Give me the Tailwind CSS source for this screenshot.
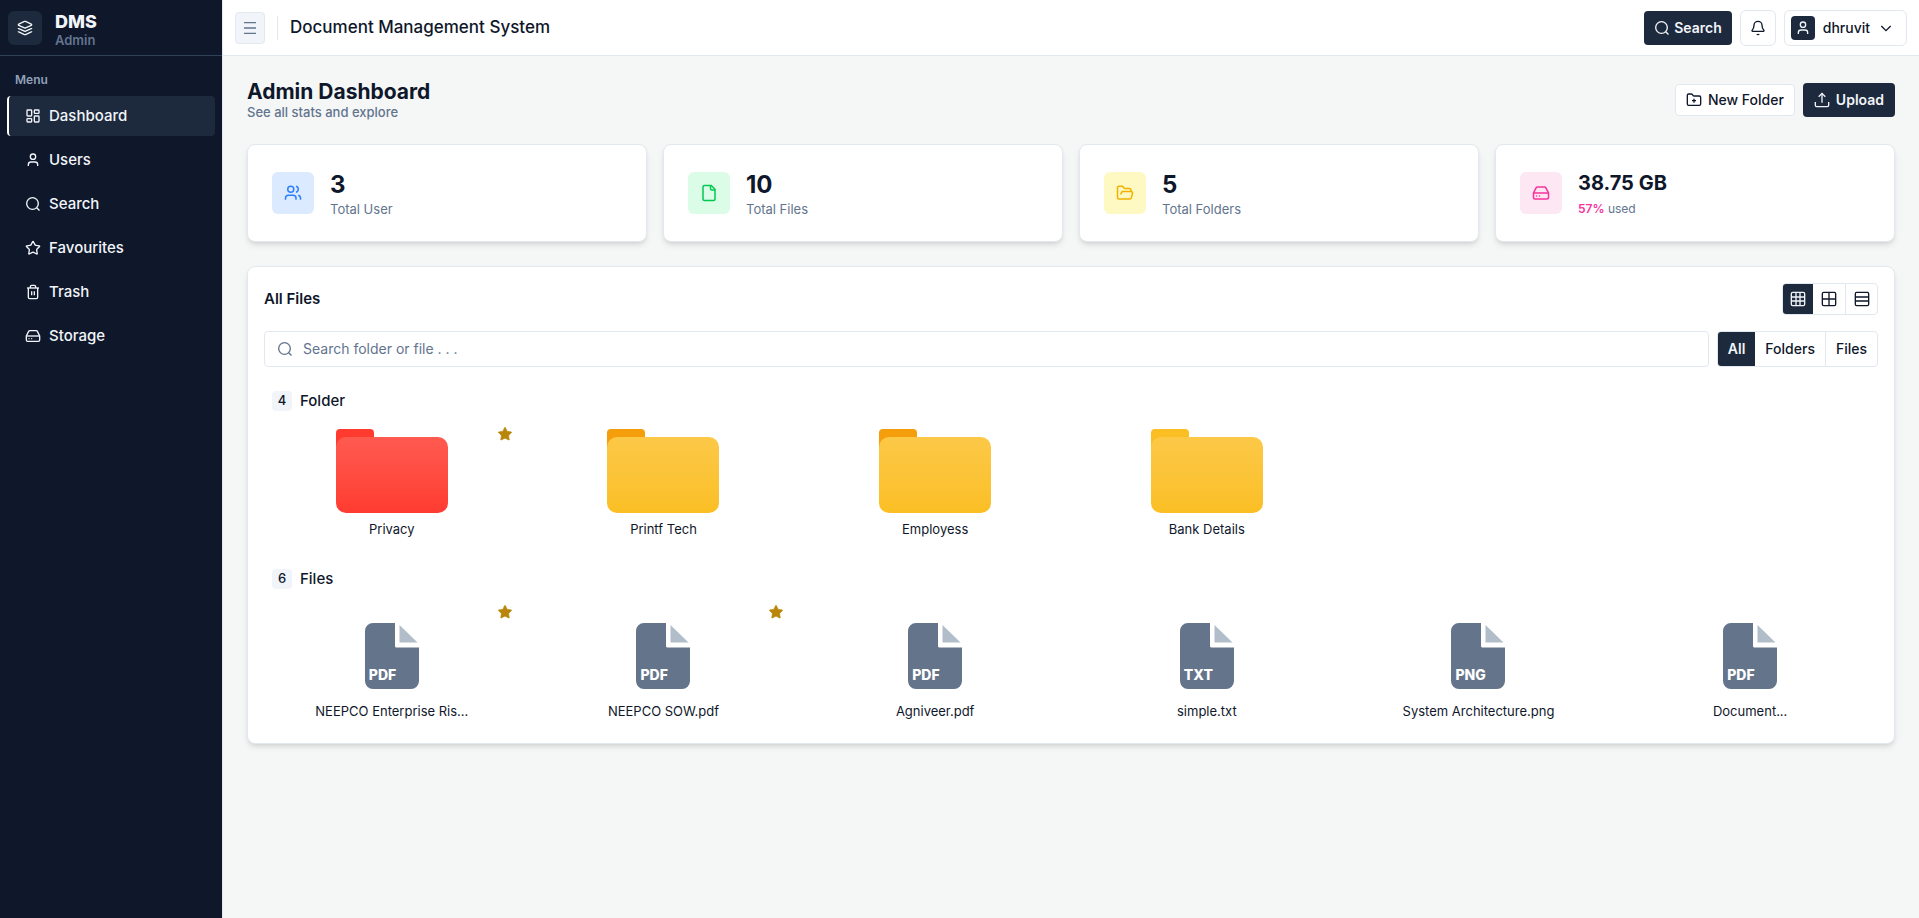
<!DOCTYPE html>
<html lang="en">
<head>
    <meta charset="UTF-8">
    <meta name="viewport" content="width=device-width, initial-scale=1.0">
    <title>DMS - Admin Dashboard</title>
    <script src="https://cdn.jsdelivr.net/npm/@tailwindcss/browser@4"></script>
</head>
<body class="bg-[#f5f7f7] font-['Inter',sans-serif] text-slate-900">
    <!-- Icon sprite -->
    <svg class="hidden" xmlns="http://www.w3.org/2000/svg">
        <symbol id="i-layers" viewBox="0 0 24 24"><path d="M12.83 2.18a2 2 0 0 0-1.66 0L2.6 6.08a1 1 0 0 0 0 1.83l8.58 3.91a2 2 0 0 0 1.66 0l8.58-3.9a1 1 0 0 0 0-1.83Z"/><path d="M2 12a1 1 0 0 0 .58.91l8.6 3.91a2 2 0 0 0 1.65 0l8.58-3.9A1 1 0 0 0 22 12"/><path d="M2 17a1 1 0 0 0 .58.91l8.6 3.91a2 2 0 0 0 1.65 0l8.58-3.9A1 1 0 0 0 22 17"/></symbol>
        <symbol id="i-dashboard" viewBox="0 0 24 24"><rect width="7" height="9" x="3" y="3" rx="1"/><rect width="7" height="5" x="14" y="3" rx="1"/><rect width="7" height="9" x="14" y="12" rx="1"/><rect width="7" height="5" x="3" y="16" rx="1"/></symbol>
        <symbol id="i-user" viewBox="0 0 24 24"><path d="M19 21v-2a4 4 0 0 0-4-4H9a4 4 0 0 0-4 4v2"/><circle cx="12" cy="7" r="4"/></symbol>
        <symbol id="i-users" viewBox="0 0 24 24"><path d="M16 21v-2a4 4 0 0 0-4-4H6a4 4 0 0 0-4 4v2"/><circle cx="9" cy="7" r="4"/><path d="M22 21v-2a4 4 0 0 0-3-3.87"/><path d="M16 3.13a4 4 0 0 1 0 7.75"/></symbol>
        <symbol id="i-search" viewBox="0 0 24 24"><circle cx="11.25" cy="11.25" r="8.75"/><path d="m17.500 17.500 4.250 4.250"/></symbol>
        <symbol id="i-star" viewBox="0 0 24 24"><path d="M11.525 2.295a.53.53 0 0 1 .95 0l2.31 4.679a2.12 2.12 0 0 0 1.595 1.16l5.166.756a.53.53 0 0 1 .294.904l-3.736 3.638a2.12 2.12 0 0 0-.611 1.878l.882 5.14a.53.53 0 0 1-.771.56l-4.618-2.428a2.12 2.12 0 0 0-1.973 0L6.396 21.01a.53.53 0 0 1-.77-.56l.881-5.139a2.12 2.12 0 0 0-.611-1.879L2.16 9.795a.53.53 0 0 1 .294-.906l5.165-.755a2.12 2.12 0 0 0 1.597-1.16z"/></symbol>
        <symbol id="i-trash" viewBox="0 0 24 24"><path d="M3 6h18"/><path d="M19 6v14a2 2 0 0 1-2 2H7a2 2 0 0 1-2-2V6"/><path d="M8 6V4a2 2 0 0 1 2-2h4a2 2 0 0 1 2 2v2"/><path d="M10 11v6M14 11v6"/></symbol>
        <symbol id="i-drive" viewBox="0 0 24 24"><path d="M22 12H2"/><path d="M5.45 5.11 2 12v6a2 2 0 0 0 2 2h16a2 2 0 0 0 2-2v-6l-3.45-6.89A2 2 0 0 0 16.76 4H7.24a2 2 0 0 0-1.79 1.11z"/><path stroke-linecap="round" d="M6 16h.01M10 16h.01"/></symbol>
        <symbol id="i-menu" viewBox="0 0 24 24"><path d="M3 4h18M3 12h18M3 20h18"/></symbol>
        <symbol id="i-bell" viewBox="0 0 24 24"><path d="M10.268 21a2 2 0 0 0 3.464 0"/><path d="M3.262 15.326A1 1 0 0 0 4 17h16a1 1 0 0 0 .74-1.673C19.41 13.956 18 12.499 18 8A6 6 0 0 0 6 8c0 4.499-1.411 5.956-2.738 7.326"/></symbol>
        <symbol id="i-chevron" viewBox="0 0 24 24"><path d="m5 9 7 7 7-7"/></symbol>
        <symbol id="i-folder-plus" viewBox="0 0 24 24"><path d="M12 10v6M9 13h6"/><path d="M20 20a2 2 0 0 0 2-2V8a2 2 0 0 0-2-2h-7.900a2 2 0 0 1-1.690-.9L9.600 3.900A2 2 0 0 0 7.930 3H4a2 2 0 0 0-2 2v13a2 2 0 0 0 2 2Z"/></symbol>
        <symbol id="i-upload" viewBox="0 0 24 24"><path d="M12 16V2"/><path d="m7 7 5-5 5 5"/><path d="M2 15v5a2 2 0 0 0 2 2h16a2 2 0 0 0 2-2v-5"/></symbol>
        <symbol id="i-file" viewBox="0 0 24 24"><path d="M15 2H6a2 2 0 0 0-2 2v16a2 2 0 0 0 2 2h12a2 2 0 0 0 2-2V7Z"/><path d="M14 2v4a2 2 0 0 0 2 2h4"/></symbol>
        <symbol id="i-folder-open" viewBox="0 0 24 24"><path d="m6 14 1.5-2.9A2 2 0 0 1 9.24 10H20a2 2 0 0 1 1.94 2.5l-1.54 6a2 2 0 0 1-1.95 1.5H4a2 2 0 0 1-2-2V5a2 2 0 0 1 2-2h3.9a2 2 0 0 1 1.69.9l.81 1.2a2 2 0 0 0 1.67.9H18a2 2 0 0 1 2 2v2"/></symbol>
        <symbol id="i-grid3" viewBox="0 0 24 24"><rect width="20" height="20" x="2" y="2" rx="2"/><path d="M2 9h20M2 15h20M9 2v20M15 2v20"/></symbol>
        <symbol id="i-grid2" viewBox="0 0 24 24"><rect width="20" height="20" x="2" y="2" rx="2"/><path d="M2 12h20M12 2v20"/></symbol>
        <symbol id="i-rows" viewBox="0 0 24 24"><rect width="20" height="20" x="2" y="2" rx="2"/><path d="M2 9h20M2 15h20"/></symbol>
        <symbol id="i-doc" viewBox="0 0 54 66"><path fill="#64748b" d="M8 0H30V23a1.500 1.500 0 0 0 1.500 1.500H54V58a8 8 0 0 1-8 8H8a8 8 0 0 1-8-8V8a8 8 0 0 1 8-8Z"/><path fill="#b1bdc9" d="M34.500 2 52.500 19.500H34.500Z"/></symbol>
    </svg>

    <div class="flex min-h-screen">
        <!-- Sidebar -->
        <aside class="w-[223px] shrink-0 border-r border-slate-200 bg-slate-900">
            <div class="flex h-14 items-center gap-[13px] border-b border-slate-700 px-2">
                <div class="flex size-[34px] items-center justify-center rounded-md bg-slate-800">
                    <svg class="size-4 fill-none stroke-slate-100 stroke-2"><use href="#i-layers"/></svg>
                </div>
                <div class="flex flex-col pt-1">
                    <span class="text-lg leading-5 font-extrabold text-slate-100">DMS</span>
                    <span class="text-[13px] leading-4 font-semibold text-slate-500">Admin</span>
                </div>
            </div>
            <p class="px-[15px] pt-4 pb-2 text-xs font-semibold text-slate-400">Menu</p>
            <nav class="flex flex-col gap-1 px-[7px] text-[15px] font-medium text-slate-100">
                <a href="#" class="flex h-10 items-center gap-2 rounded border-l-2 border-white bg-slate-800 px-4"><svg class="size-4 fill-none stroke-current stroke-2"><use href="#i-dashboard"/></svg>Dashboard</a>
                <a href="#" class="flex h-10 items-center gap-2 rounded border-l-2 border-transparent px-4"><svg class="size-4 fill-none stroke-current stroke-2"><use href="#i-user"/></svg>Users</a>
                <a href="#" class="flex h-10 items-center gap-2 rounded border-l-2 border-transparent px-4"><svg class="size-4 fill-none stroke-current stroke-2"><use href="#i-search"/></svg>Search</a>
                <a href="#" class="flex h-10 items-center gap-2 rounded border-l-2 border-transparent px-4"><svg class="size-4 fill-none stroke-current stroke-2"><use href="#i-star"/></svg>Favourites</a>
                <a href="#" class="flex h-10 items-center gap-2 rounded border-l-2 border-transparent px-4"><svg class="size-4 fill-none stroke-current stroke-2"><use href="#i-trash"/></svg>Trash</a>
                <a href="#" class="flex h-10 items-center gap-2 rounded border-l-2 border-transparent px-4"><svg class="size-4 fill-none stroke-current stroke-2"><use href="#i-drive"/></svg>Storage</a>
            </nav>
        </aside>

        <div class="min-w-0 flex-1">
            <!-- Top bar -->
            <header class="flex h-14 items-center justify-between border-b border-slate-200 bg-white px-3">
                <div class="flex items-center gap-3">
                    <button type="button" aria-label="Toggle sidebar" class="flex h-8 w-[30px] items-center justify-center rounded border border-slate-200 bg-slate-100">
                        <svg class="size-4 fill-none stroke-slate-500 stroke-2"><use href="#i-menu"/></svg>
                    </button>
                    <div class="h-6 w-px bg-slate-200"></div>
                    <h1 class="text-[17px] font-medium">Document Management System</h1>
                </div>
                <div class="flex items-center gap-2 text-sm font-medium">
                    <button type="button" class="flex h-[34px] items-center gap-1 rounded bg-slate-800 px-2.5 font-semibold text-slate-100">
                        <svg class="size-4 fill-none stroke-current stroke-2"><use href="#i-search"/></svg>Search
                    </button>
                    <button type="button" aria-label="Notifications" class="flex size-9 items-center justify-center rounded-md border border-slate-200">
                        <svg class="size-4 fill-none stroke-current stroke-2"><use href="#i-bell"/></svg>
                    </button>
                    <button type="button" class="flex h-9 items-center gap-2 rounded-md border border-slate-200 pr-3 pl-1.5">
                        <span class="flex size-6 items-center justify-center rounded bg-slate-800"><svg class="size-4 fill-none stroke-slate-100 stroke-2"><use href="#i-user"/></svg></span>
                        dhruvit
                        <svg class="size-4 fill-none stroke-current stroke-2"><use href="#i-chevron"/></svg>
                    </button>
                </div>
            </header>

            <main class="p-6">
                <div class="flex items-center justify-between">
                    <div>
                        <h2 class="text-[21px] leading-6 font-bold">Admin Dashboard</h2>
                        <p class="text-[13px] leading-4 font-medium text-slate-500">See all stats and explore</p>
                    </div>
                    <div class="flex items-center gap-2 text-sm font-medium">
                        <button type="button" class="flex h-8 items-center gap-1.5 rounded border border-slate-200 bg-white px-2.5">
                            <svg class="size-4 fill-none stroke-current stroke-2"><use href="#i-folder-plus"/></svg>New Folder
                        </button>
                        <button type="button" class="flex h-[34px] items-center gap-1.5 rounded bg-slate-800 px-[11px] font-semibold text-slate-100">
                            <svg class="size-4 fill-none stroke-current stroke-2"><use href="#i-upload"/></svg>Upload
                        </button>
                    </div>
                </div>

                <!-- Stat cards -->
                <div class="mt-6 grid grid-cols-4 gap-4">
                    <div class="flex h-[98px] items-center gap-4 rounded-lg border border-slate-200 bg-white px-6 shadow-md">
                        <div class="flex size-[42px] items-center justify-center rounded-md bg-blue-100"><svg class="size-[18px] fill-none stroke-blue-500 stroke-2"><use href="#i-users"/></svg></div>
                        <div>
                            <p class="text-2xl font-bold">3</p>
                            <p class="text-[13px] leading-4 text-slate-500">Total User</p>
                        </div>
                    </div>
                    <div class="flex h-[98px] items-center gap-4 rounded-lg border border-slate-200 bg-white px-6 shadow-md">
                        <div class="flex size-[42px] items-center justify-center rounded-md bg-green-100"><svg class="size-[18px] fill-none stroke-green-500 stroke-2"><use href="#i-file"/></svg></div>
                        <div>
                            <p class="text-2xl font-bold">10</p>
                            <p class="text-[13px] leading-4 text-slate-500">Total Files</p>
                        </div>
                    </div>
                    <div class="flex h-[98px] items-center gap-4 rounded-lg border border-slate-200 bg-white px-6 shadow-md">
                        <div class="flex size-[42px] items-center justify-center rounded-md bg-yellow-100"><svg class="size-[18px] fill-none stroke-yellow-500 stroke-2"><use href="#i-folder-open"/></svg></div>
                        <div>
                            <p class="text-2xl font-bold">5</p>
                            <p class="text-[13px] leading-4 text-slate-500">Total Folders</p>
                        </div>
                    </div>
                    <div class="flex h-[98px] items-center gap-4 rounded-lg border border-slate-200 bg-white px-6 shadow-md">
                        <div class="flex size-[42px] items-center justify-center rounded-md bg-pink-100"><svg class="size-[18px] fill-none stroke-pink-500 stroke-2"><use href="#i-drive"/></svg></div>
                        <div>
                            <p class="mb-1 text-xl font-bold">38.75 GB</p>
                            <p class="text-xs text-slate-500"><span class="font-semibold text-pink-500">57%</span> used</p>
                        </div>
                    </div>
                </div>

                <!-- File browser -->
                <section class="mt-6 rounded-lg border border-slate-200 bg-white p-4 shadow-md">
                    <div class="flex items-center justify-between">
                        <h3 class="text-[15px] leading-5 font-semibold">All Files</h3>
                        <div class="flex h-8 overflow-hidden rounded border border-slate-200">
                            <button type="button" aria-label="Small grid" class="flex w-[30px] items-center justify-center bg-slate-800 text-slate-100"><svg class="size-4 fill-none stroke-current stroke-2"><use href="#i-grid3"/></svg></button>
                            <button type="button" aria-label="Large grid" class="flex w-8 items-center justify-center"><svg class="size-4 fill-none stroke-current stroke-2"><use href="#i-grid2"/></svg></button>
                            <button type="button" aria-label="List" class="flex w-8 items-center justify-center border-l border-slate-200"><svg class="size-4 fill-none stroke-current stroke-2"><use href="#i-rows"/></svg></button>
                        </div>
                    </div>

                    <div class="mt-4 flex gap-2">
                        <label class="flex h-9 flex-1 items-center gap-2.5 rounded border border-slate-200 px-3">
                            <svg class="size-4 fill-none stroke-slate-500 stroke-2"><use href="#i-search"/></svg>
                            <input type="text" aria-label="Search folder or file" placeholder="Search folder or file . . ." class="flex-1 text-sm outline-none placeholder:text-slate-500">
                        </label>
                        <div class="flex h-9 overflow-hidden rounded border border-slate-200 text-sm font-medium">
                            <button type="button" class="bg-slate-800 px-2.5 font-semibold text-slate-100">All</button>
                            <button type="button" class="px-2.5">Folders</button>
                            <button type="button" class="border-l border-slate-200 px-2.5">Files</button>
                        </div>
                    </div>

                    <div class="mt-6 px-2">
                        <div class="flex items-center gap-2">
                            <span class="flex size-5 items-center justify-center rounded bg-slate-100 text-[13px] font-medium">4</span>
                            <h4 class="text-[15px] leading-5 font-medium">Folder</h4>
                        </div>
                        <div class="mt-2 grid grid-cols-6 gap-8">
                            <a href="#" class="relative flex flex-col items-center pt-2.5 pb-2">
                                <svg class="absolute top-[7px] -right-px size-4 fill-[#b8860b] stroke-[#b8860b]"><use href="#i-star"/></svg>
                                <div class="h-[84px] w-28">
                                    <div class="h-5 w-[38px] rounded-t bg-[#ff3b30]"></div>
                                    <div class="-mt-3 h-[76px] rounded-[10px] bg-linear-to-b from-[#ff5a50] to-[#ff3b30]"></div>
                                </div>
                                <span class="mt-2 text-[13px] leading-4">Privacy</span>
                            </a>
                            <a href="#" class="flex flex-col items-center pt-2.5 pb-2">
                                <div class="h-[84px] w-28">
                                    <div class="h-5 w-[38px] rounded-t bg-[#f59e0b]"></div>
                                    <div class="-mt-3 h-[76px] rounded-[10px] bg-linear-to-b from-[#fcc846] to-[#fbbf24]"></div>
                                </div>
                                <span class="mt-2 text-[13px] leading-4">Printf Tech</span>
                            </a>
                            <a href="#" class="flex flex-col items-center pt-2.5 pb-2">
                                <div class="h-[84px] w-28">
                                    <div class="h-5 w-[38px] rounded-t bg-[#f59e0b]"></div>
                                    <div class="-mt-3 h-[76px] rounded-[10px] bg-linear-to-b from-[#fcc846] to-[#fbbf24]"></div>
                                </div>
                                <span class="mt-2 text-[13px] leading-4">Employess</span>
                            </a>
                            <a href="#" class="flex flex-col items-center pt-2.5 pb-2">
                                <div class="h-[84px] w-28">
                                    <div class="h-5 w-[38px] rounded-t bg-[#fbbf24]"></div>
                                    <div class="-mt-3 h-[76px] rounded-[10px] bg-linear-to-b from-[#fcc846] to-[#fbbf24]"></div>
                                </div>
                                <span class="mt-2 text-[13px] leading-4">Bank Details</span>
                            </a>
                        </div>
                    </div>

                    <div class="mt-6 px-2">
                        <div class="flex items-center gap-2">
                            <span class="flex size-5 items-center justify-center rounded bg-slate-100 text-[13px] font-medium">6</span>
                            <h4 class="text-[15px] leading-5 font-medium">Files</h4>
                        </div>
                        <div class="mt-2 grid grid-cols-6 gap-8">
                            <a href="#" class="relative flex flex-col items-center pt-[26px] pb-2">
                                <svg class="absolute top-[7px] -right-px size-4 fill-[#b8860b] stroke-[#b8860b]"><use href="#i-star"/></svg>
                                <div class="relative h-[66px] w-[54px]"><svg class="size-full"><use href="#i-doc"/></svg><span class="absolute bottom-1.5 left-1 text-sm leading-4 font-extrabold text-white">PDF</span></div>
                                <span class="mt-3.5 text-[13px] leading-4">NEEPCO Enterprise Ris...</span>
                            </a>
                            <a href="#" class="relative flex flex-col items-center pt-[26px] pb-2">
                                <svg class="absolute top-[7px] -right-px size-4 fill-[#b8860b] stroke-[#b8860b]"><use href="#i-star"/></svg>
                                <div class="relative h-[66px] w-[54px]"><svg class="size-full"><use href="#i-doc"/></svg><span class="absolute bottom-1.5 left-1 text-sm leading-4 font-extrabold text-white">PDF</span></div>
                                <span class="mt-3.5 text-[13px] leading-4">NEEPCO SOW.pdf</span>
                            </a>
                            <a href="#" class="flex flex-col items-center pt-[26px] pb-2">
                                <div class="relative h-[66px] w-[54px]"><svg class="size-full"><use href="#i-doc"/></svg><span class="absolute bottom-1.5 left-1 text-sm leading-4 font-extrabold text-white">PDF</span></div>
                                <span class="mt-3.5 text-[13px] leading-4">Agniveer.pdf</span>
                            </a>
                            <a href="#" class="flex flex-col items-center pt-[26px] pb-2">
                                <div class="relative h-[66px] w-[54px]"><svg class="size-full"><use href="#i-doc"/></svg><span class="absolute bottom-1.5 left-1 text-sm leading-4 font-extrabold text-white">TXT</span></div>
                                <span class="mt-3.5 text-[13px] leading-4">simple.txt</span>
                            </a>
                            <a href="#" class="flex flex-col items-center pt-[26px] pb-2">
                                <div class="relative h-[66px] w-[54px]"><svg class="size-full"><use href="#i-doc"/></svg><span class="absolute bottom-1.5 left-1 text-sm leading-4 font-extrabold text-white">PNG</span></div>
                                <span class="mt-3.5 text-[13px] leading-4">System Architecture.png</span>
                            </a>
                            <a href="#" class="flex flex-col items-center pt-[26px] pb-2">
                                <div class="relative h-[66px] w-[54px]"><svg class="size-full"><use href="#i-doc"/></svg><span class="absolute bottom-1.5 left-1 text-sm leading-4 font-extrabold text-white">PDF</span></div>
                                <span class="mt-3.5 text-[13px] leading-4">Document...</span>
                            </a>
                        </div>
                    </div>
                </section>
            </main>
        </div>
    </div>
</body>
</html>
